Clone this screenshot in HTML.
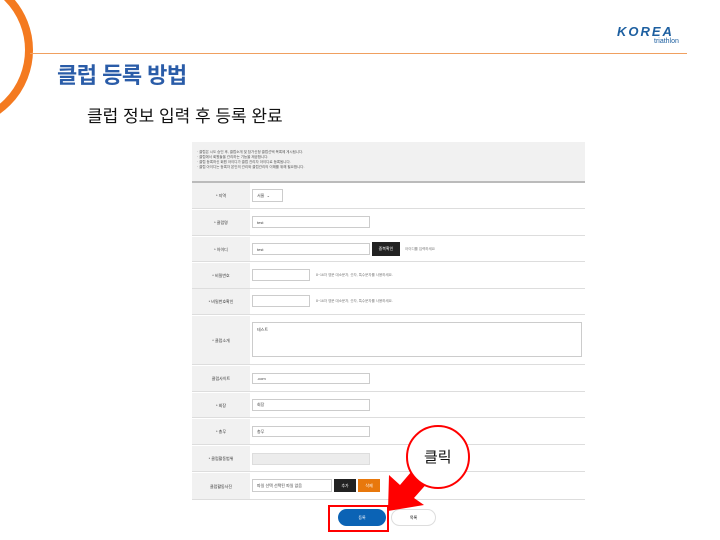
<!DOCTYPE html>
<html><head><meta charset="utf-8"><style>
*{margin:0;padding:0;box-sizing:border-box}
body{width:720px;height:540px;overflow:hidden;background:#fff;position:relative;font-family:"Liberation Sans","Noto Sans CJK KR",sans-serif}
.a{position:absolute}
.lbl{position:absolute;left:192px;width:58px;background:#f1f1f1;font-size:4px;color:#333;text-align:center;display:flex;align-items:center;justify-content:center}
.row{position:absolute;left:192px;width:393px;border-bottom:1px solid #ddd}
.inp{position:absolute;border:1px solid #ccc;background:#fff;font-size:4px;color:#444;padding-left:4px;display:flex;align-items:center}
</style></head><body>
<svg class="a" style="left:0;top:0" width="60" height="140"><circle cx="-45" cy="50" r="74" fill="none" stroke="#f47a20" stroke-width="8"/></svg>
<div class="a" style="left:30px;top:53px;width:657px;height:1px;background:#f0a060"></div>
<div class="a" style="left:57px;top:58px;font-size:22px;font-weight:bold;color:#2a5ca8;letter-spacing:-0.5px">클럽 등록 방법</div>
<div class="a" style="left:87px;top:102px;font-size:17px;color:#111">클럽 정보 입력 후 등록 완료</div>
<div class="a" style="left:617px;top:24px;font-size:13px;font-weight:bold;font-style:italic;color:#1d5fa0;letter-spacing:2px">KOREA</div>
<div class="a" style="left:654px;top:38px;font-size:7px;color:#1d5fa0">triathlon</div>

<div class="a" style="left:192px;top:142px;width:393px;height:40px;background:#f1f1f1;font-size:3.5px;color:#555;padding:8px 5px;line-height:5px">· 클럽은 시도 승인 후, 클럽소개 및 참가신청 클럽선택 목록에 게시됩니다.<br>· 클럽에서 회원들을 관리하는 기능을 제공합니다.<br>· 클럽 등록하신 회원 아이디가 클럽 관리자 아이디로 등록됩니다.<br>· 클럽 아이디는 등록자 본인의 관리와 클럽관리의 이해를 위해 필요합니다.</div>
<div class="a" style="left:192px;top:181px;width:393px;height:2px;background:#bbb"></div>

<div class="lbl" style="top:183px;height:26px">* 지역</div><div class="row" style="top:183px;height:26px"></div>
<div class="inp" style="left:252px;top:189px;width:31px;height:13px">서울 &nbsp;⌄</div>
<div class="lbl" style="top:210px;height:26px">* 클럽명</div><div class="row" style="top:210px;height:26px"></div>
<div class="inp" style="left:252px;top:216px;width:118px;height:12px">test</div>
<div class="lbl" style="top:237px;height:25px">* 아이디</div><div class="row" style="top:237px;height:25px"></div>
<div class="inp" style="left:252px;top:243px;width:118px;height:12px">test</div>
<div class="a" style="left:372px;top:242px;width:28px;height:14px;background:#222;color:#fff;font-size:4px;display:flex;align-items:center;justify-content:center">중복확인</div>
<div class="a" style="left:405px;top:247px;font-size:3.5px;color:#777">아이디를 입력하세요</div>
<div class="lbl" style="top:263px;height:26px">* 비밀번호</div><div class="row" style="top:263px;height:26px"></div>
<div class="inp" style="left:252px;top:269px;width:58px;height:12px"></div>
<div class="a" style="left:316px;top:273px;font-size:3.5px;color:#777">8~16자 영문 대소문자, 숫자, 특수문자를 사용하세요.</div>
<div class="lbl" style="top:289px;height:26px">* 비밀번호확인</div><div class="row" style="top:289px;height:26px"></div>
<div class="inp" style="left:252px;top:295px;width:58px;height:12px"></div>
<div class="a" style="left:316px;top:299px;font-size:3.5px;color:#777">8~16자 영문 대소문자, 숫자, 특수문자를 사용하세요.</div>
<div class="lbl" style="top:316px;height:49px">* 클럽소개</div><div class="row" style="top:316px;height:49px"></div>
<div class="inp" style="left:252px;top:322px;width:330px;height:35px;align-items:flex-start;padding-top:4px">테스트</div>
<div class="lbl" style="top:366px;height:26px">클럽사이트</div><div class="row" style="top:366px;height:26px"></div>
<div class="inp" style="left:252px;top:373px;width:118px;height:11px">.com</div>
<div class="lbl" style="top:393px;height:25px">* 회장</div><div class="row" style="top:393px;height:25px"></div>
<div class="inp" style="left:252px;top:399px;width:118px;height:12px">회장</div>
<div class="lbl" style="top:419px;height:26px">* 총무</div><div class="row" style="top:419px;height:26px"></div>
<div class="inp" style="left:252px;top:426px;width:118px;height:11px">총무</div>
<div class="lbl" style="top:446px;height:26px">* 클럽활동범위</div><div class="row" style="top:446px;height:26px"></div>
<div class="a" style="left:252px;top:453px;width:118px;height:12px;background:#ececec;border:1px solid #ddd"></div>
<div class="lbl" style="top:473px;height:27px">클럽활동사진</div><div class="row" style="top:473px;height:27px"></div>
<div class="inp" style="left:252px;top:479px;width:80px;height:13px">파일 선택 선택된 파일 없음</div>
<div class="a" style="left:334px;top:479px;width:22px;height:13px;background:#222;color:#fff;font-size:4px;display:flex;align-items:center;justify-content:center">추가</div>
<div class="a" style="left:358px;top:479px;width:22px;height:13px;background:#e8780c;color:#fff;font-size:4px;display:flex;align-items:center;justify-content:center">삭제</div>

<div class="a" style="left:338px;top:509px;width:48px;height:17px;border-radius:9px;background:#0b63b5;color:#fff;font-size:4px;display:flex;align-items:center;justify-content:center">등록</div>
<div class="a" style="left:391px;top:509px;width:45px;height:17px;border-radius:9px;border:1px solid #ddd;background:#fff;font-size:4px;display:flex;align-items:center;justify-content:center">목록</div>
<div class="a" style="left:328px;top:505px;width:61px;height:27px;border:2px solid #f00"></div>
<svg class="a" style="left:0;top:0" width="720" height="540">
<polygon points="389,475 400,485 423,458 438,471 414,498 424,505 388,511" fill="#f00"/>
<circle cx="438" cy="457" r="31" fill="#fff" stroke="#f00" stroke-width="2"/>
</svg>
<div class="a" style="left:424px;top:446px;font-size:15px;color:#111">클릭</div>
</body></html>
